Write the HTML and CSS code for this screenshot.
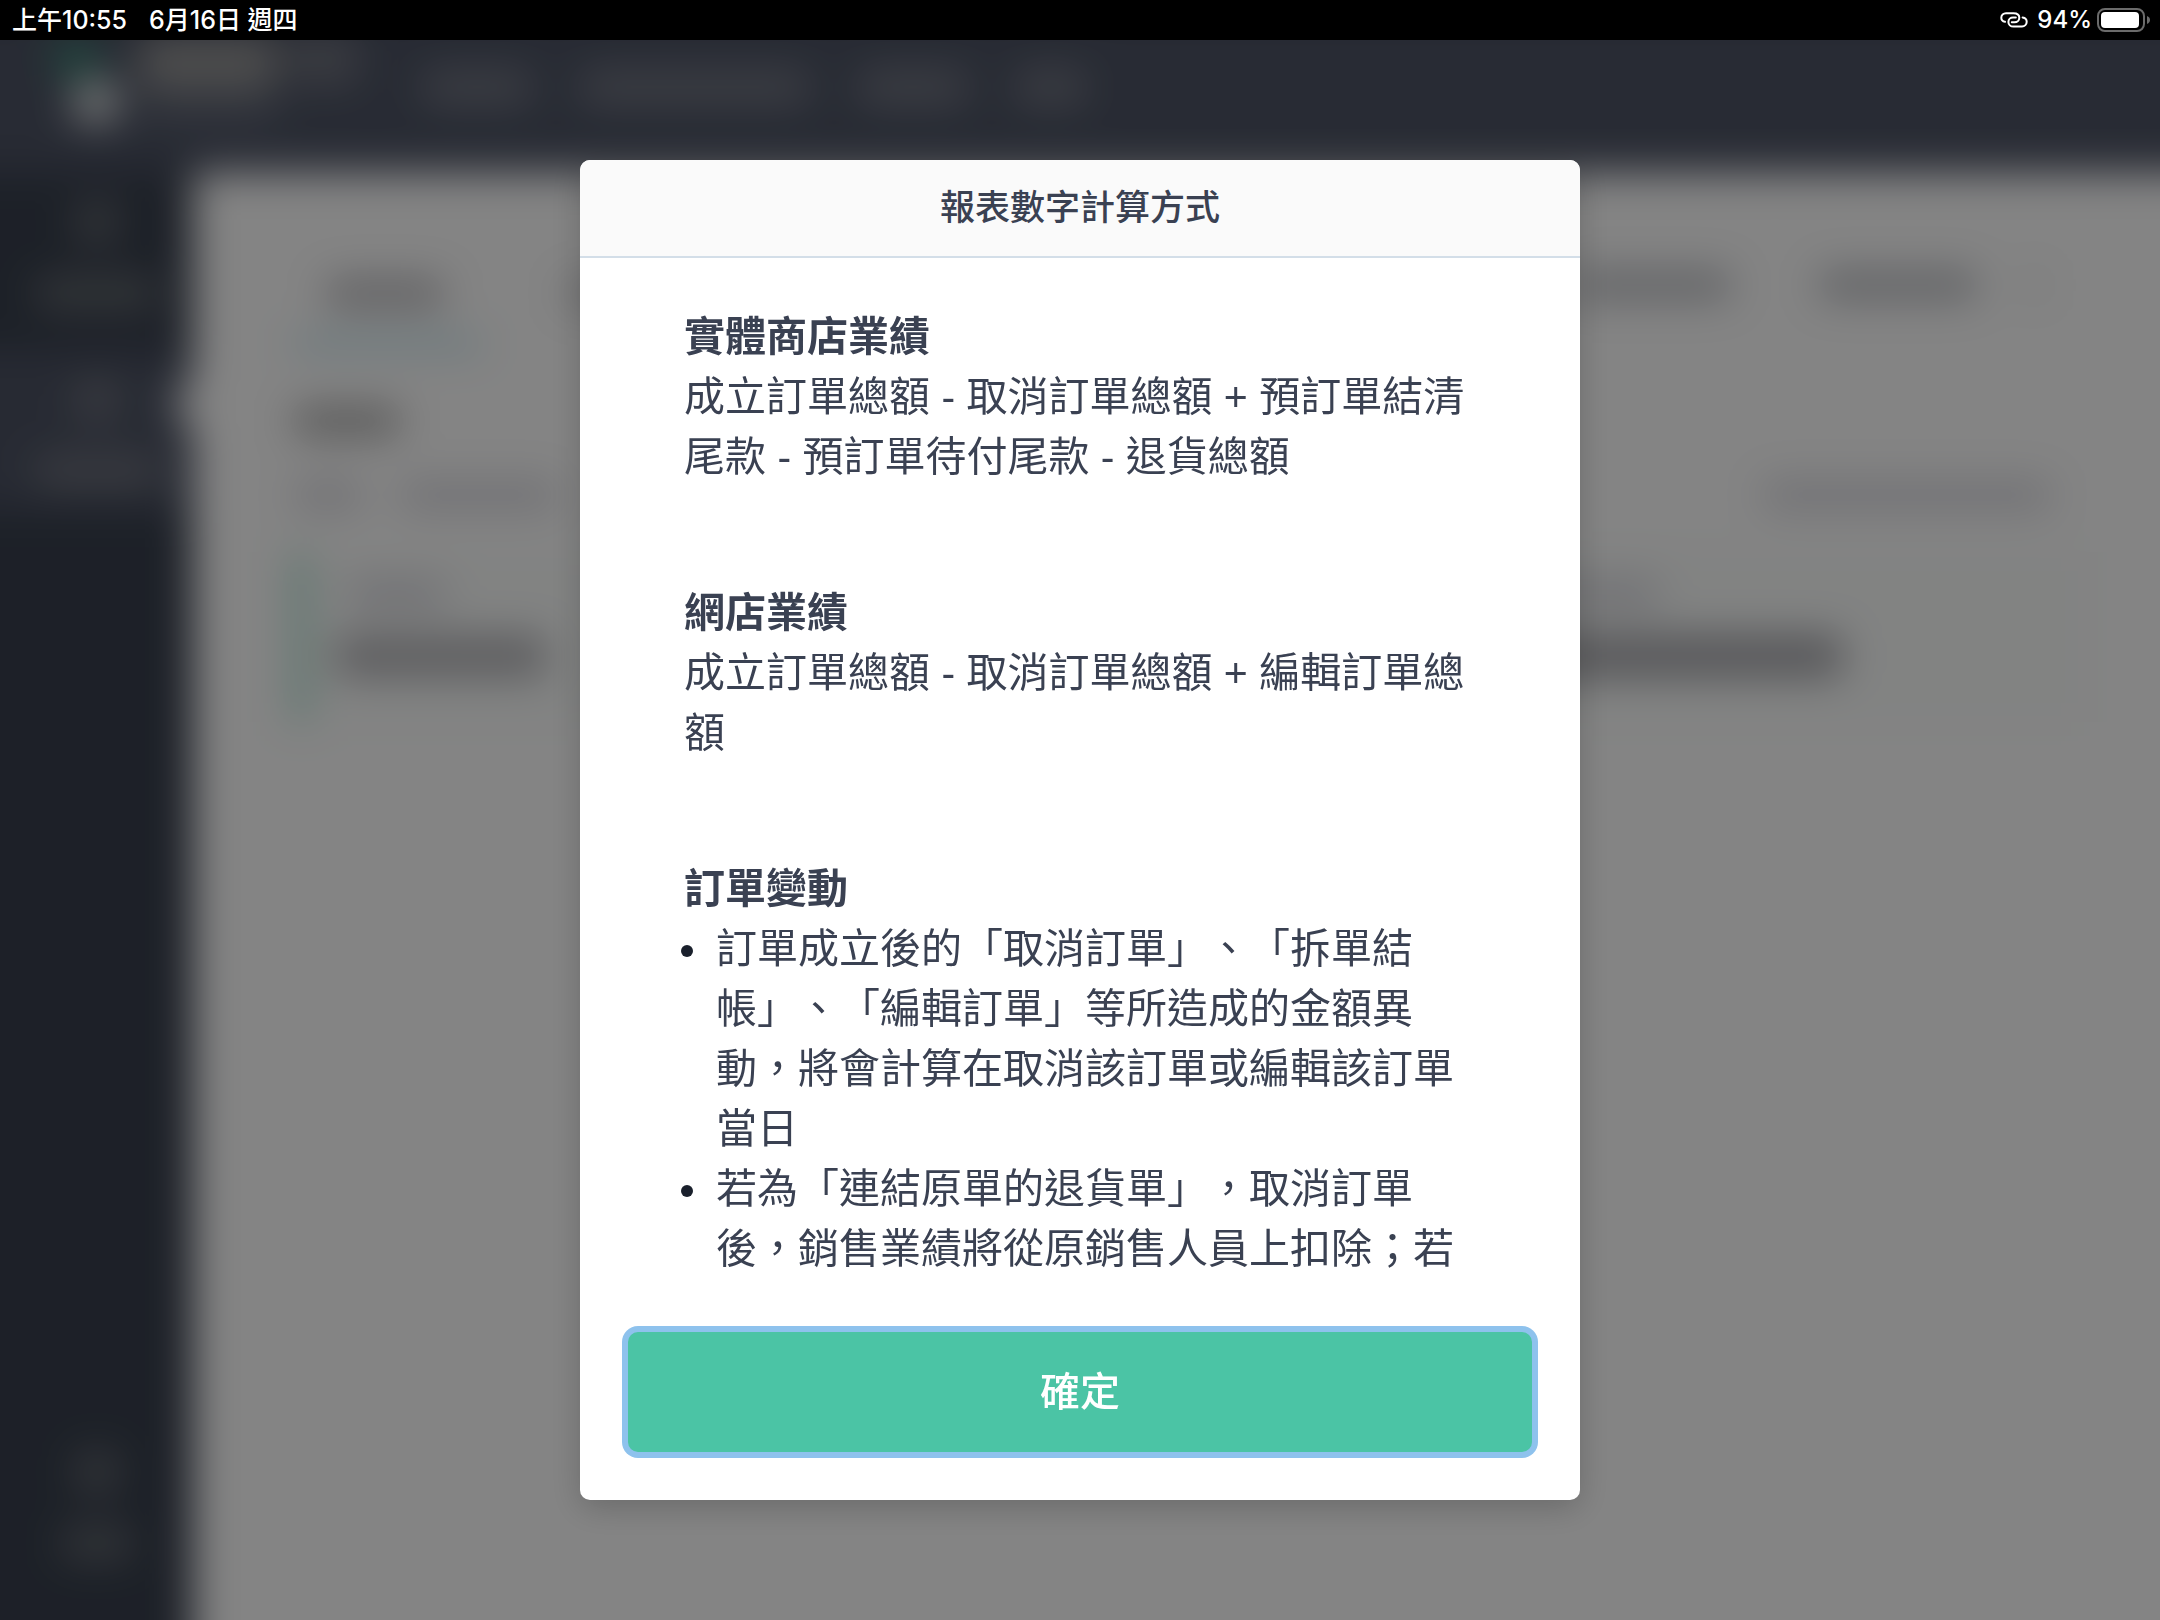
FILE: index.html
```html
<!DOCTYPE html>
<html lang="zh-Hant">
<head>
<meta charset="utf-8">
<meta name="viewport" content="width=device-width, initial-scale=1">
<title>報表數字計算方式</title>
<link rel="stylesheet" href="styles.css">
</head>
<body>

  <div class="status">
    <span>上午10:55</span>
    <span>6月16日 週四</span>
    <div class="status-right">
      <svg class="link-icon" width="28" height="18" viewBox="0 0 28 18" fill="none" stroke="#fff" stroke-width="2" stroke-linecap="round">
        <path d="M5 10.8C2.6 10.4 1.3 8.8 1.3 6.8C1.3 4.2 3.4 2.2 6 2.2H13.5C17 2.2 19.3 4 19.3 6.7C19.3 9.4 17.2 11.2 14.5 11.2H11.8"/>
        <path d="M22.6 6.4C25.2 6.8 26.7 8.6 26.7 10.8C26.7 13.5 24.6 15.5 22 15.5H13.5C10.5 15.5 8.4 13.5 8.4 10.9C8.4 8.3 10.5 6.5 13 6.5H15.8"/>
      </svg>
      <span>94%</span>
      <svg class="battery" width="54" height="24" viewBox="0 0 54 24">
        <rect x="1" y="1" width="46" height="22" rx="7" fill="none" stroke="#6b6b6b" stroke-width="2"/>
        <rect x="4" y="4" width="38" height="16" rx="4" fill="#fff"/>
        <path d="M50 8C52 8.8 53 10.2 53 12C53 13.8 52 15.2 50 16Z" fill="#6b6b6b"/>
      </svg>
    </div>
  </div>

  <div class="app" aria-hidden="true">
    <div class="topbar">
      <div class="logo"><i class="logo-a"></i><i class="logo-b"></i></div>
      <div class="shop">
        <div class="row"><i class="ph shop-name"></i><i class="ph shop-tag"></i></div>
        <i class="ph shop-sub"></i>
      </div>
      <div class="topnav">
        <i class="ph w110"></i><i class="ph w230"></i><i class="ph w110"></i><i class="ph w70"></i>
      </div>
    </div>
    <div class="columns">
      <div class="side">
        <div class="side-item"><i class="ph icon"></i><i class="ph label"></i></div>
        <div class="side-item active"><i class="ph icon"></i><i class="ph label"></i><i class="arrow"></i></div>
        <div class="side-item last"><i class="ph icon"></i><i class="ph label short"></i></div>
      </div>
      <div class="main">
        <div class="tabs">
          <div class="tab on"><i class="ph w120"></i></div>
          <div class="tab"><i class="ph w120"></i></div>
          <div class="filters"><i class="ph w160"></i><i class="ph w160"></i><i class="ph w20"></i></div>
        </div>
        <i class="ph heading"></i>
        <div class="dates">
          <i class="ph w70"></i><i class="ph w160"></i><i class="ph w290"></i>
        </div>
        <div class="cards">
          <div class="card"><i class="ph name"></i><i class="ph value"></i></div>
          <div class="card"><i class="ph name"></i><i class="ph value"></i></div>
        </div>
      </div>
    </div>
  </div>

  <div class="overlay">
    <div class="modal" role="dialog" aria-modal="true" aria-labelledby="modal-title">
      <h1 class="modal-title" id="modal-title">報表數字計算方式</h1>
      <div class="modal-body">
        <section>
          <h2>實體商店業績</h2>
          <p>成立訂單總額 - 取消訂單總額 + 預訂單結清尾款 - 預訂單待付尾款 - 退貨總額</p>
        </section>
        <section>
          <h2>網店業績</h2>
          <p>成立訂單總額 - 取消訂單總額 + 編輯訂單總額</p>
        </section>
        <section>
          <h2>訂單變動</h2>
          <ul>
            <li>訂單成立後的「取消訂單」、「拆單結帳」、「編輯訂單」等所造成的金額異動，將會計算在取消該訂單或編輯該訂單當日</li>
            <li>若為「連結原單的退貨單」，取消訂單後，銷售業績將從原銷售人員上扣除；若</li>
          </ul>
        </section>
      </div>
      <div class="modal-foot">
        <button type="button" class="confirm">確定</button>
      </div>
    </div>
  </div>

</body>
</html>
```
FILE: styles.css
```css
* {
  box-sizing: border-box;
}

body {
  margin: 0;
  height: 100vh;
  display: flex;
  flex-direction: column;
  overflow: hidden;
  background: #000;
  font-family: "Liberation Sans", "Noto Sans CJK TC", sans-serif;
  text-spacing-trim: space-all;
}

/* status bar */
.status {
  position: relative;
  z-index: 2;
  flex: none;
  height: 40px;
  padding: 0 9px 0 12px;
  display: flex;
  align-items: center;
  gap: 22px;
  background: #000;
  color: #fff;
  font: 500 25px/40px Inter, "Noto Sans CJK TC", sans-serif;
}

.status-right {
  margin-left: auto;
  display: flex;
  align-items: center;
  gap: 5px;
  font-size: 24px;
}

.link-icon {
  margin-right: 4px;
}

/* page behind the dialog, runs past the window so that the blur has no soft edge */
.app {
  flex: 1;
  margin: -40px -80px -80px;
  display: flex;
  flex-direction: column;
  background: #fdfdfd;
  filter: blur(20px);
}

.ph {
  display: block;
  height: 30px;
  border-radius: 12px;
}

.w20 { width: 20px; }
.w70 { width: 70px; }
.w110 { width: 110px; }
.w120 { width: 120px; }
.w160 { width: 160px; }
.w230 { width: 230px; }
.w290 { width: 290px; }

.topbar {
  height: 172px;
  padding: 36px 0 0 132px;
  display: flex;
  background: #4d5364;
}

.logo {
  width: 86px;
}

.logo i {
  display: block;
  width: 48px;
  height: 44px;
  border-radius: 50%;
}

.logo-a {
  background: #3c8474;
}

.logo .logo-b {
  margin-left: 20px;
  background: #ecefef;
}

.shop {
  width: 284px;
}

.row {
  display: flex;
  gap: 12px;
}

.shop .shop-name {
  width: 140px;
  height: 52px;
  background: #979797;
}

.shop .shop-tag {
  width: 68px;
  height: 48px;
  background: #72757f;
}

.shop .shop-sub {
  width: 140px;
  margin-top: 8px;
  height: 20px;
  background: #6e7380;
}

.topnav {
  padding-top: 36px;
  display: flex;
  gap: 48px;
}

.topnav .ph {
  background: #7a7e88;
}

.columns {
  flex: 1;
  display: flex;
}

.side {
  width: 273px;
  padding-left: 80px;
  padding-bottom: 118px;
  display: flex;
  flex-direction: column;
  background: #383f4d;
}

.side-item {
  position: relative;
  height: 160px;
  padding-top: 30px;
  display: flex;
  flex-direction: column;
  align-items: center;
  gap: 36px;
}

.side-item .ph {
  background: #686e72;
}

.side-item .icon {
  width: 40px;
  height: 40px;
}

.side-item .label {
  width: 124px;
}

.side-item .short {
  width: 70px;
}

.side-item.active {
  margin: 18px 0 0 -80px;
  padding-left: 80px;
  background: #4c5263;
}

.side-item.active .ph {
  background: #73767f;
}

.side-item.last {
  margin-top: auto;
}

/* notch that points at the active item */
.arrow {
  position: absolute;
  right: 0;
  top: 30px;
  border: 24px solid transparent;
  border-right-color: #fff;
  border-left: 0;
}

.main {
  flex: 1;
  padding: 78px 156px 0 100px;
}

.tabs {
  display: flex;
  gap: 50px;
}

.tab {
  width: 188px;
  height: 98px;
  padding: 28px 32px;
}

.tab .ph {
  background: #d4d4d6;
}

.tab.on {
  border-bottom: 8px solid #86c8dc;
}

.tab.on .ph {
  background: #b8b8bc;
}

.filters {
  flex: 1;
  padding-top: 20px;
  display: flex;
  justify-content: flex-end;
  gap: 86px;
}

.filters .ph {
  background: #babcc1;
}

.filters .w20 {
  margin: 0 40px 0 -40px;
  background: #e4e6e6;
}

.main .heading {
  width: 108px;
  margin-top: 58px;
  background: #aaaaaa;
}

.dates {
  margin-top: 44px;
  display: flex;
  gap: 36px;
}

.dates .ph {
  background: #d8d8de;
}

.dates .w290 {
  margin: 0 32px 0 auto;
}

.cards {
  margin-top: 42px;
  display: flex;
  gap: 24px;
}

.card {
  flex: 1;
  height: 170px;
  padding: 26px 28px;
  border-left: 14px solid #98d8c4;
  background: #f9fbfa;
}

.card .name {
  width: 100px;
  margin-left: 12px;
  background: #d8d8de;
}

.card .value {
  width: 212px;
  height: 44px;
  margin-top: 26px;
  background: #b4b4b8;
}

.card + .card .value {
  width: 600px;
  background: #a6a6ab;
}

.card + .card .name {
  width: 405px;
}

/* dialog */
.overlay {
  position: fixed;
  inset: 40px 0 0;
  padding: 120px 24px;
  display: flex;
  justify-content: center;
  background: rgba(0, 0, 0, .48);
}

.modal {
  width: 100%;
  max-width: 1000px;
  display: flex;
  flex-direction: column;
  overflow: hidden;
  border-radius: 10px;
  background: #fff;
  color: #3a4152;
  font-size: 41px;
  line-height: 60px;
  box-shadow: 0 8px 32px rgba(0, 0, 0, .2);
}

.modal-title {
  flex: none;
  margin: 0;
  padding: 18px 24px;
  border-bottom: 2px solid #d3dee8;
  background: #fafafa;
  font-size: 35px;
  font-weight: 500;
  line-height: 60px;
  text-align: center;
}

.modal-body {
  flex: 1;
  min-height: 0;
  overflow-y: auto;
  padding: 49px 104px 0;
}

.modal-body section + section {
  margin-top: 96px;
}

.modal-body h2 {
  margin: 0;
  font-size: 41px;
  font-weight: 700;
}

.modal-body p {
  margin: 0;
}

.modal-body ul {
  margin: 0;
  padding-left: 28px;
}

.modal-body li {
  padding-left: 4px;
}

.modal-body li::marker {
  color: #1a202c;
}

.modal-foot {
  padding: 48px;
}

.confirm {
  display: block;
  width: 100%;
  height: 120px;
  border: 0;
  border-radius: 10px;
  background: #4bc4a5;
  color: #fff;
  font: inherit;
  font-size: 40px;
  font-weight: 500;
  box-shadow: 0 0 0 6px rgba(66, 153, 225, .6);
}
```
